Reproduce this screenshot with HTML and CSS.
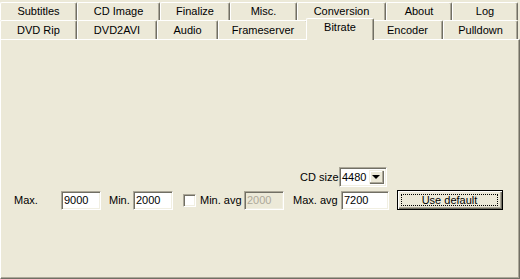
FILE: index.html
```html
<!DOCTYPE html>
<html>
<head>
<meta charset="utf-8">
<link rel="stylesheet" href="styles.css">
</head>
<body>
<div class="tabctl">
  <div class="tabrow back">
    <div class="tab">Subtitles</div>
    <div class="tab">CD Image</div>
    <div class="tab">Finalize</div>
    <div class="tab">Misc.</div>
    <div class="tab">Conversion</div>
    <div class="tab">About</div>
    <div class="tab">Log</div>
  </div>
  <div class="tabrow front">
    <div class="tab">DVD Rip</div>
    <div class="tab">DVD2AVI</div>
    <div class="tab">Audio</div>
    <div class="tab">Frameserver</div>
    <div class="tab selected">Bitrate</div>
    <div class="tab">Encoder</div>
    <div class="tab">Pulldown</div>
  </div>
  <div class="panel">
    <div class="row cdrow">
      <span class="lbl">CD size</span>
      <div class="combo">
        <span class="combo-val">4480</span>
        <span class="combo-btn"><span class="arrow"></span></span>
      </div>
    </div>
    <div class="row mainrow">
      <span class="lbl l-max">Max.</span>
      <span class="edit">9000</span>
      <span class="lbl l-min">Min.</span>
      <span class="edit">2000</span>
      <span class="check"></span>
      <span class="lbl l-minavg">Min. avg</span>
      <span class="edit disabled">2000</span>
      <span class="lbl l-maxavg">Max. avg</span>
      <span class="edit wide">7200</span>
      <span class="button"><span class="focus">Use default</span></span>
    </div>
  </div>
</div>
</body>
</html>
```

FILE: styles.css
```css
html, body {
  margin: 0;
  padding: 0;
  background: #ECE9D8;
}
body {
  width: 520px;
  height: 279px;
  overflow: hidden;
  font-family: "Liberation Sans", Arial, sans-serif;
  font-size: 11px;
  color: #000;
}
.tabctl {
  width: 520px;
  display: flex;
  flex-direction: column;
}
.tabrow {
  display: flex;
  width: 518px;
}
.tabrow.back {
  margin-top: 2px;
  height: 18px;
}
.tabrow.front {
  height: 19px;
  align-items: flex-end;
}
.tab {
  box-sizing: border-box;
  border-top: 1px solid #fff;
  border-left: 1px solid #fff;
  border-right: 1px solid #716F64;
  box-shadow: inset -1px 0 #ACA899;
  border-radius: 2px 2px 0 0;
  text-align: center;
  white-space: nowrap;
  background: #ECE9D8;
}
.back .tab {
  height: 18px;
  line-height: 17px;
}
.front .tab {
  height: 19px;
  line-height: 18px;
}
.back .tab:nth-child(1) { width: 77px; }
.back .tab:nth-child(2) { width: 83px; }
.back .tab:nth-child(3) { width: 70px; }
.back .tab:nth-child(4) { width: 67px; }
.back .tab:nth-child(5) { width: 89px; }
.back .tab:nth-child(6) { width: 66px; }
.back .tab:nth-child(7) { width: 66px; }
.front .tab:nth-child(1) { width: 77px; }
.front .tab:nth-child(2) { width: 80px; }
.front .tab:nth-child(3) { width: 61px; }
.front .tab:nth-child(4) { width: 90px; }
.front .tab:nth-child(5) { width: 64px; }
.front .tab:nth-child(6) { width: 71px; }
.front .tab:nth-child(7) { width: 75px; }
.front .tab.selected {
  width: 68px;
  height: 22px;
  line-height: 16px;
  margin: 0 -2px -1px -2px;
  position: relative;
  z-index: 2;
  align-self: flex-end;
}
.panel {
  box-sizing: border-box;
  width: 520px;
  height: 240px;
  border-top: 1px solid #fff;
  border-left: 1px solid #fff;
  border-right: 1px solid #716F64;
  border-bottom: 1px solid #716F64;
  box-shadow: inset -1px -1px #ACA899;
  padding-top: 127px;
  display: flex;
  flex-direction: column;
  gap: 3px;
}
.row {
  display: flex;
  align-items: center;
}
.cdrow {
  padding-left: 299px;
  height: 20px;
}
.cdrow .lbl {
  width: 39px;
}
.lbl {
  white-space: nowrap;
}
.combo {
  box-sizing: border-box;
  width: 48px;
  height: 20px;
  background: #fff;
  border: 1px solid;
  border-color: #ACA899 #fff #fff #ACA899;
  box-shadow: inset 1px 1px #716F64, inset -1px -1px #F1EFE2;
  display: flex;
  align-items: stretch;
  padding: 2px 2px 2px 2px;
}
.combo-val {
  flex: 1;
  line-height: 14px;
}
.combo-btn {
  box-sizing: border-box;
  width: 15px;
  background: #ECE9D8;
  box-shadow: inset 1px 1px #F1EFE2, inset -1px -1px #716F64, inset -2px -2px #ACA899, inset 2px 2px #fff;
  display: flex;
  align-items: center;
  justify-content: center;
}
.arrow {
  width: 0;
  height: 0;
  border-left: 4px solid transparent;
  border-right: 4px solid transparent;
  border-top: 4px solid #000;
  margin-left: -1px;
}
.mainrow {
  padding-left: 13px;
  height: 20px;
}
.edit {
  box-sizing: border-box;
  width: 40px;
  height: 19px;
  background: #fff;
  border: 1px solid;
  border-color: #ACA899 #fff #fff #ACA899;
  box-shadow: inset 1px 1px #716F64, inset -1px -1px #F1EFE2;
  padding: 0 0 0 2px;
  line-height: 17px;
}
.edit.wide {
  width: 48px;
}
.edit.disabled {
  background: #ECE9D8;
  color: #ACA899;
}
.l-max { width: 47px; }
.l-min { width: 24px; margin-left: 8px; }
.check {
  box-sizing: border-box;
  width: 13px;
  height: 13px;
  margin-left: 10px;
  margin-right: 4px;
  background: #fff;
  border: 1px solid;
  border-color: #ACA899 #fff #fff #ACA899;
  box-shadow: inset 1px 1px #716F64, inset -1px -1px #F1EFE2;
}
.l-minavg { width: 44px; }
.l-maxavg { width: 48px; margin-left: 9px; }
.button {
  box-sizing: border-box;
  width: 106px;
  height: 20px;
  margin-left: 8px;
  border: 1px solid #000;
  background: #ECE9D8;
  box-shadow: inset 1px 1px #fff, inset -1px -1px #716F64, inset -2px -2px #ACA899;
  padding: 3px 4px 3px 3px;
  display: flex;
}
.focus {
  flex: 1;
  border: 1px dotted #000;
  text-align: center;
  line-height: 10px;
}
```
